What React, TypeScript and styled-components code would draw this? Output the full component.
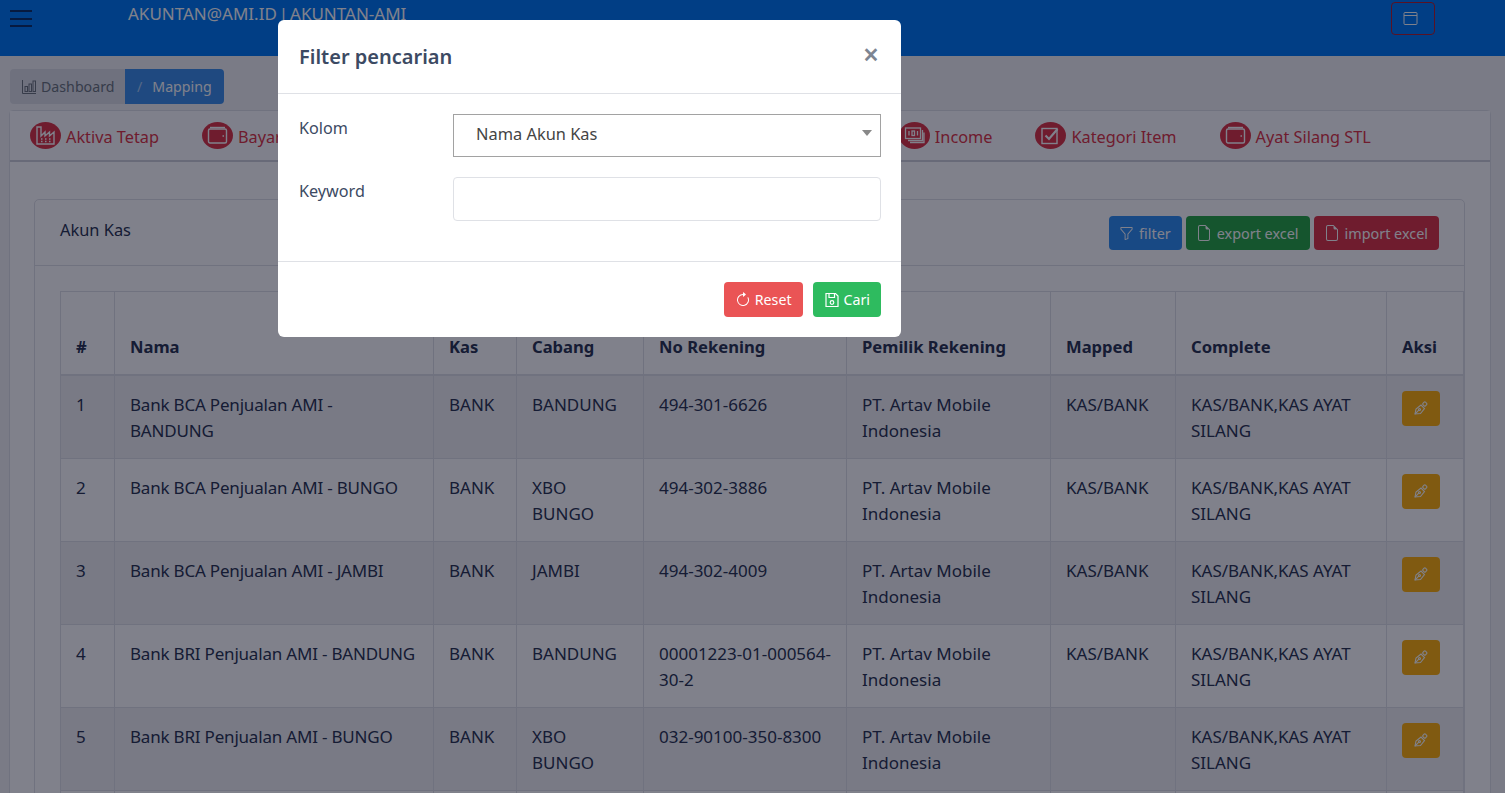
import React from 'react'
import styled, { createGlobalStyle } from 'styled-components'
import { BsArrowClockwise, BsFileEarmark, BsFunnel } from 'react-icons/bs'

const GlobalStyle = createGlobalStyle`
	html, body {
		margin: 0;
		height: 100%;
		overflow: hidden;
		background: #f2f3f5;
	}
	body {
		font-family: "Noto Sans", "Open Sans", sans-serif;
		font-size: 16px;
		color: #2a3450;
	}
	* {
		box-sizing: border-box;
	}
`

const Page = styled.div`
	height: 793px;
	overflow: hidden;
`

const Header = styled.header`
	height: 56px;
	background: #0079f3;
	display: flex;
	padding: 2px 70px 0 10px;
`

const MenuButton = styled.div`
	width: 22px;
	height: 17px;
	margin-top: 8px;
	border-top: 2px solid #0c3068;
	border-bottom: 2px solid #0c3068;
	position: relative;
	&::after {
		content: '';
		position: absolute;
		left: 0;
		right: 0;
		top: 5.5px;
		height: 2px;
		background: #0c3068;
	}
`

const Account = styled.div`
	margin-left: 96px;
	flex: auto;
	font-size: 17px;
	line-height: 24px;
	word-spacing: -2.5px;
	color: #fff;
`

const WindowButton = styled.div`
	width: 44px;
	height: 33px;
	border: 1px solid #b02030;
	border-radius: 4px;
	display: flex;
	align-items: center;
	justify-content: center;
	padding-right: 6px;
	color: #fff;
`

const Crumbs = styled.nav`
	display: flex;
	margin: 13px 0 0 10px;
	width: 214px;
	height: 35px;
	border-radius: 4px;
	overflow: hidden;
	font-size: 14.2px;
	line-height: 35px;
`

const CrumbHome = styled.div`
	width: 115px;
	background: #dcdee4;
	color: #6c757d;
	display: flex;
	align-items: center;
	gap: 4px;
	padding-left: 11px;
`

const CrumbActive = styled.div`
	flex: auto;
	background: #3d8fe8;
	color: #fff;
	padding-left: 12px;
	display: flex;
	gap: 10px;
	span:first-child {
		color: #a9cdf5;
	}
`

const TabCard = styled.section`
	margin: 6px 14px 0 9px;
	background: #fff;
	border: 1px solid #dfe1e6;
	border-radius: 4px;
`

const Tabs = styled.div`
	height: 51px;
	display: flex;
	align-items: center;
	gap: 43px;
	padding-left: 20px;
	border-bottom: 2px solid #cfd1d8;
	background: #fdfdfe;
`

const Tab = styled.div`
	display: flex;
	align-items: center;
	gap: 5px;
	color: #dc3545;
	font-size: 16.3px;
	line-height: 30px;
	white-space: nowrap;
	span:last-child {
		padding-top: 2px;
	}
`

const TabIcon = styled.span`
	width: 31px;
	height: 27px;
	border-radius: 50%;
	background: #dc3545;
	color: #fff;
	display: flex;
	align-items: center;
	justify-content: center;
`

const TabBody = styled.div`
	padding: 37px 25px 0 24px;
`

const Card = styled.div`
	border: 1px solid #dfe1e6;
	border-radius: 5px;
`

const CardHead = styled.div`
	height: 66px;
	display: flex;
	align-items: center;
	justify-content: space-between;
	padding: 0 25px;
	border-bottom: 1px solid #dfe1e6;
`

const CardTitle = styled.div`
	font-size: 16.4px;
	margin-top: -7px;
`

const Actions = styled.div`
	display: flex;
	gap: 4px;
	margin-top: 1px;
`

const ActionButton = styled.div<{ $bg: string }>`
	height: 34px;
	padding: 0 11px 0 10px;
	border-radius: 4px;
	background: ${p => p.$bg};
	color: #fff;
	font-size: 14.4px;
	display: flex;
	align-items: center;
	gap: 5px;
`

const CardBody = styled.div`
	padding: 25px 1px 0 25px;
`

const Table = styled.table`
	width: 1403px;
	border-collapse: collapse;
	table-layout: fixed;
	font-size: 17px;
	line-height: 26px;
	th,
	td {
		border: 1px solid #dfe1e6;
		padding: 16px 15px 14px;
		vertical-align: top;
		text-align: left;
	}
	th {
		height: 83px;
		padding-bottom: 14px;
		vertical-align: bottom;
		border-bottom-width: 2px;
		font-size: 16.6px;
		font-weight: 700;
	}
	tbody tr:nth-child(odd) {
		background: #f0f0f2;
	}
`

const NameCell = styled.td`
	letter-spacing: -0.2px;
`

const PenButton = styled.div`
	width: 38px;
	height: 35px;
	margin-top: -1px;
	border-radius: 4px;
	background: #ffb10a;
	color: #fff;
	display: flex;
	align-items: center;
	justify-content: center;
`

const Backdrop = styled.div`
	position: fixed;
	inset: 0;
	background: rgba(1, 3, 24, 0.5);
`

const Modal = styled.div`
	position: fixed;
	top: 20px;
	left: 278px;
	width: 623px;
	height: 317px;
	background: #fff;
	border-radius: 6px;
	color: #3c4a63;
`

const ModalHead = styled.div`
	height: 74px;
	padding: 0 22px 0 21px;
	display: flex;
	align-items: center;
	justify-content: space-between;
	border-bottom: 1px solid #dfe1e6;
`

const ModalTitle = styled.div`
	font-size: 20px;
	font-weight: 600;
`

const Close = styled.div`
	font-size: 28px;
	font-weight: 600;
	color: #7d8592;
	line-height: 20px;
	margin-top: -5px;
`

const ModalBody = styled.div`
	height: 168px;
	padding: 20px 20px 0 21px;
	border-bottom: 1px solid #dfe1e6;
`

const Field = styled.div`
	display: flex;
	margin-bottom: 20px;
`

const FieldLabel = styled.div`
	width: 154px;
	padding-top: 1px;
	line-height: 26px;
	font-size: 16.2px;
`

const Select = styled.div`
	flex: auto;
	height: 43px;
	border: 1px solid #a2a2a2;
	padding-left: 22px;
	font-size: 16.4px;
	line-height: 38px;
	position: relative;
	color: #444;
	&::after {
		content: '';
		position: absolute;
		right: 8px;
		top: 15px;
		border: 5px solid transparent;
		border-top: 6px solid #888;
		border-bottom: 0;
	}
`

const Input = styled.div`
	flex: auto;
	height: 44px;
	border: 1px solid #dfe1e6;
	border-radius: 4px;
`

const ModalFoot = styled.div`
	display: flex;
	justify-content: flex-end;
	gap: 10px;
	padding: 20px 20px 0;
`

const FootButton = styled.div<{ $bg: string }>`
	height: 35px;
	padding: 0 11px;
	border-radius: 4px;
	background: ${p => p.$bg};
	color: #fff;
	font-size: 14.2px;
	display: flex;
	align-items: center;
	gap: 4px;
`

const WindowIcon = () => (
	<svg width="15" height="15" viewBox="0 0 15 15" fill="none" stroke="currentColor">
		<rect x="1" y="1.5" width="13" height="12" rx="1" />
		<path d="M1 4.5h13" />
	</svg>
)

const ChartIcon = () => (
	<svg width="16" height="16" viewBox="0 0 16 16" fill="none" stroke="currentColor">
		<path d="M1.5 1v13.5H15" />
		<rect x="4" y="7.5" width="2.5" height="5" />
		<rect x="8" y="5" width="2.5" height="7.5" />
		<rect x="12" y="2" width="2.5" height="10.5" />
	</svg>
)

const FactoryIcon = () => (
	<svg width="21" height="21" viewBox="0 0 21 21" fill="none" stroke="currentColor" strokeWidth="1.4">
		<path d="M2 2v17h17V7l-4.5 4V7L10 11V7l-4 4V2z" />
		<path d="M6 14h1.5M10 14h1.5M14 14h1.5M6 16.5h1.5M10 16.5h1.5M14 16.5h1.5" />
	</svg>
)

const WalletIcon = () => (
	<svg width="21" height="21" viewBox="0 0 21 21" fill="none" stroke="currentColor" strokeWidth="1.4">
		<rect x="1.5" y="4" width="18" height="14" rx="1.5" />
		<path d="M3 2.5h15" />
		<path d="M15.5 11h1.5" />
	</svg>
)

const IncomeIcon = () => (
	<svg width="21" height="21" viewBox="0 0 21 21" fill="none" stroke="currentColor" strokeWidth="1.3">
		<rect x="1.5" y="3" width="15" height="10.5" />
		<rect x="8" y="6" width="2.5" height="4.5" />
		<path d="M5 6v4.5M13.5 6v4.5" />
		<path d="M18.5 5v10.5H4M20 7.5v10H6" />
	</svg>
)

const CheckIcon = () => (
	<svg width="21" height="21" viewBox="0 0 21 21" fill="none" stroke="currentColor">
		<rect x="2" y="3.5" width="15" height="15" strokeWidth="1.4" />
		<path d="M5.5 10.5l3.5 3.5 8.5-10" strokeWidth="2.2" />
	</svg>
)

const PenIcon = () => (
	<svg width="16" height="16" viewBox="0 0 16 16" fill="none" stroke="currentColor" strokeWidth="1.1">
		<path d="M2 14l1-5 5-4 3.5 3.5-4 5z" />
		<circle cx="6.5" cy="9.500" r="1" />
		<path d="M2 14l3.800-3.800" />
		<rect x="10" y="2.200" width="3.600" height="3.600" rx="1" transform="rotate(45 11.800 4)" />
	</svg>
)

const FloppyIcon = () => (
	<svg width="16" height="16" viewBox="0 0 16 16" fill="none" stroke="currentColor" strokeWidth="1.2">
		<path d="M2 1.500h9.500l2.500 2.500v10.500H2z" />
		<path d="M5 1.500v4h5.500v-4" />
		<circle cx="8" cy="10.500" r="1.800" />
	</svg>
)

const tabs = [
	{ label: 'Aktiva Tetap', icon: <FactoryIcon /> },
	{ label: 'Bayar Hutang', icon: <WalletIcon /> },
	{ label: 'Akun Kas', icon: <WalletIcon /> },
	{ label: 'Biaya Usaha', icon: <IncomeIcon /> },
	{ label: 'Piutang Usaha', icon: <IncomeIcon /> },
	{ label: 'Income', icon: <IncomeIcon /> },
	{ label: 'Kategori Item', icon: <CheckIcon /> },
	{ label: 'Ayat Silang STL', icon: <WalletIcon /> },
]

const columns: [string, number][] = [
	['#', 54],
	['Nama', 319],
	['Kas', 83],
	['Cabang', 127],
	['No Rekening', 203],
	['Pemilik Rekening', 204],
	['Mapped', 125],
	['Complete', 211],
	['Aksi', 77],
]

const rows = [
	['Bank BCA Penjualan AMI - BANDUNG', 'BANDUNG', '494-301-6626', 'KAS/BANK'],
	['Bank BCA Penjualan AMI - BUNGO', 'XBO BUNGO', '494-302-3886', 'KAS/BANK'],
	['Bank BCA Penjualan AMI - JAMBI', 'JAMBI', '494-302-4009', 'KAS/BANK'],
	['Bank BRI Penjualan AMI - BANDUNG', 'BANDUNG', '00001223-01-000564-30-2', 'KAS/BANK'],
	['Bank BRI Penjualan AMI - BUNGO', 'XBO BUNGO', '032-90100-350-8300', ''],
	['Bank BRI Penjualan AMI - JAMBI', 'JAMBI', '032-90100-350-8301', ''],
]

export default function App() {
	return (
		<Page>
			<GlobalStyle />
			<Header>
				<MenuButton />
				<Account>AKUNTAN@AMI.ID | AKUNTAN-AMI</Account>
				<WindowButton>
					<WindowIcon />
				</WindowButton>
			</Header>
			<Crumbs>
				<CrumbHome>
					<ChartIcon /> Dashboard
				</CrumbHome>
				<CrumbActive>
					<span>/</span>
					<span>Mapping</span>
				</CrumbActive>
			</Crumbs>
			<TabCard>
				<Tabs>
					{tabs.map(t => (
						<Tab key={t.label}>
							<TabIcon>{t.icon}</TabIcon>
							<span>{t.label}</span>
						</Tab>
					))}
				</Tabs>
				<TabBody>
					<Card>
						<CardHead>
							<CardTitle>Akun Kas</CardTitle>
							<Actions>
								<ActionButton $bg="#2f8ef0">
									<BsFunnel size={15} /> filter
								</ActionButton>
								<ActionButton $bg="#28a745">
									<BsFileEarmark size={16} /> export excel
								</ActionButton>
								<ActionButton $bg="#dc3545">
									<BsFileEarmark size={16} /> import excel
								</ActionButton>
							</Actions>
						</CardHead>
						<CardBody>
							<Table>
								<colgroup>
									{columns.map(([name, width]) => (
										<col key={name} width={width} />
									))}
								</colgroup>
								<thead>
									<tr>
										{columns.map(([name]) => (
											<th key={name}>{name}</th>
										))}
									</tr>
								</thead>
								<tbody>
									{rows.map((r, i) => (
										<tr key={r[0]}>
											<td>{i + 1}</td>
											<NameCell>{r[0]}</NameCell>
											<td>BANK</td>
											<td>{r[1]}</td>
											<td>{r[2]}</td>
											<td>PT. Artav Mobile Indonesia</td>
											<td>{r[3]}</td>
											<td>KAS/BANK,KAS AYAT SILANG</td>
											<td>
												<PenButton>
													<PenIcon />
												</PenButton>
											</td>
										</tr>
									))}
								</tbody>
							</Table>
						</CardBody>
					</Card>
				</TabBody>
			</TabCard>
			<Backdrop />
			<Modal>
				<ModalHead>
					<ModalTitle>Filter pencarian</ModalTitle>
					<Close>×</Close>
				</ModalHead>
				<ModalBody>
					<Field>
						<FieldLabel>Kolom</FieldLabel>
						<Select>Nama Akun Kas</Select>
					</Field>
					<Field>
						<FieldLabel>Keyword</FieldLabel>
						<Input />
					</Field>
				</ModalBody>
				<ModalFoot>
					<FootButton $bg="#ea5455">
						<BsArrowClockwise size={16} /> Reset
					</FootButton>
					<FootButton $bg="#2ebb5f">
						<FloppyIcon /> Cari
					</FootButton>
				</ModalFoot>
			</Modal>
		</Page>
	)
}
